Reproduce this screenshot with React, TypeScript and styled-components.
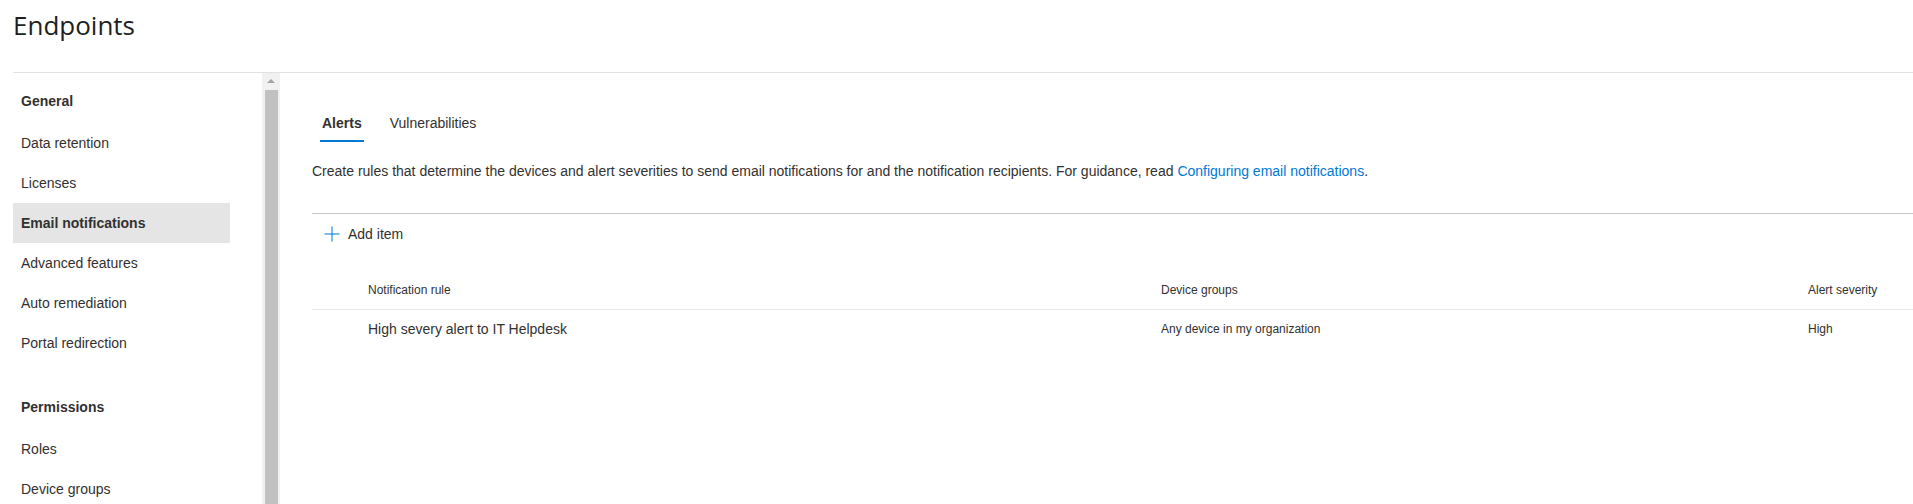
import React from "react"
import styled, { createGlobalStyle } from "styled-components"

const GlobalStyle = createGlobalStyle`
  html, body {
    margin: 0;
    padding: 0;
    background: #ffffff;
    overflow: hidden;
  }
  body {
    font-family: "Segoe UI", "Liberation Sans", Arial, sans-serif;
    color: #323130;
    -webkit-font-smoothing: antialiased;
  }
`

type NavEntry = { label: string; heading?: boolean; selected?: boolean; spaced?: boolean }

const NAV: NavEntry[] = [
  { label: "General", heading: true },
  { label: "Data retention" },
  { label: "Licenses" },
  { label: "Email notifications", selected: true },
  { label: "Advanced features" },
  { label: "Auto remediation" },
  { label: "Portal redirection" },
  { label: "Permissions", heading: true, spaced: true },
  { label: "Roles" },
  { label: "Device groups" },
]

const TABS = ["Alerts", "Vulnerabilities"]

const ROWS = [
  { rule: "High severy alert to IT Helpdesk", groups: "Any device in my organization", severity: "High" },
]

const PlusIcon = () => (
  <svg width="16" height="16" viewBox="0 0 16 16" aria-hidden="true">
    <path d="M8 0.5V15.5M0.5 8H15.5" stroke="#0078d4" strokeWidth="1" fill="none" />
  </svg>
)

const App = () => {
  return (
    <Page>
      <GlobalStyle />
      <Header>
        <Title>Endpoints</Title>
      </Header>
      <Body>
        <Sidebar>
          {NAV.map((item) =>
            item.heading ? (
              <NavHeading key={item.label} spaced={item.spaced}>
                {item.label}
              </NavHeading>
            ) : (
              <NavItem key={item.label} selected={item.selected}>
                {item.label}
              </NavItem>
            )
          )}
        </Sidebar>
        <ScrollTrack>
          <ScrollArrow />
          <ScrollThumb />
        </ScrollTrack>
        <Main>
          <TabBar>
            {TABS.map((t, i) => (
              <Tab key={t} active={i === 0}>
                {t}
              </Tab>
            ))}
          </TabBar>
          <Description>
            Create rules that determine the devices and alert severities to send email notifications for
            and the notification recipients. For guidance, read{" "}
            <Link href="#">Configuring email notifications</Link>.
          </Description>
          <CommandBar>
            <CommandButton>
              <PlusIcon />
              <span>Add item</span>
            </CommandButton>
          </CommandBar>
          <Table>
            <HeaderRow>
              <span />
              <HeaderCell>Notification rule</HeaderCell>
              <HeaderCell>Device groups</HeaderCell>
              <HeaderCell>Alert severity</HeaderCell>
            </HeaderRow>
            {ROWS.map((r) => (
              <DataRow key={r.rule}>
                <span />
                <Cell primary>{r.rule}</Cell>
                <Cell>{r.groups}</Cell>
                <Cell>{r.severity}</Cell>
              </DataRow>
            ))}
          </Table>
        </Main>
      </Body>
    </Page>
  )
}

const Page = styled.div`
  width: 1913px;
  height: 504px;
  overflow: hidden;
`

const Header = styled.header`
  margin-left: 13px;
  height: 73px;
  border-bottom: 1px solid #e1e1e1;
  box-sizing: border-box;
  padding-top: 8px;
`

const Title = styled.h1`
  margin: 0;
  font-family: "Open Sans", "Segoe UI", sans-serif;
  font-weight: 400;
  font-size: 26px;
  line-height: 34px;
  color: #201f1e;
`

const Body = styled.div`
  display: flex;
  height: 431px;
`

const Sidebar = styled.nav`
  width: 249px;
  padding: 8px 0 0 13px;
  box-sizing: content-box;
  display: flex;
  flex-direction: column;
`

const NavHeading = styled.div<{ spaced?: boolean }>`
  width: 217px;
  height: 40px;
  line-height: 40px;
  padding-left: 8px;
  box-sizing: border-box;
  margin-top: ${(p) => (p.spaced ? "24px" : "0")};
  margin-bottom: 2px;
  font-size: 14px;
  font-weight: 600;
  color: #323130;
`

const NavItem = styled.div<{ selected?: boolean }>`
  width: 217px;
  height: 40px;
  line-height: 40px;
  padding-left: 8px;
  box-sizing: border-box;
  font-size: 14px;
  font-weight: ${(p) => (p.selected ? 600 : 400)};
  background: ${(p) => (p.selected ? "#e5e5e5" : "transparent")};
  color: #323130;
`

const ScrollTrack = styled.div`
  width: 18px;
  flex-shrink: 0;
  background: #f1f1f1;
  display: flex;
  flex-direction: column;
  align-items: center;
  padding-top: 6px;
  box-sizing: border-box;
`

const ScrollArrow = styled.div`
  width: 0;
  height: 0;
  border-left: 4px solid transparent;
  border-right: 4px solid transparent;
  border-bottom: 4px solid #a3a3a3;
`

const ScrollThumb = styled.div`
  margin-top: 7px;
  width: 13px;
  flex: 1;
  background: #c1c1c1;
`

const Main = styled.main`
  flex: 1;
  padding: 30px 0 0 32px;
  display: flex;
  flex-direction: column;
`

const TabBar = styled.div`
  display: flex;
  gap: 8px;
  height: 40px;
`

const Tab = styled.div<{ active?: boolean }>`
  position: relative;
  padding: 0 10px;
  line-height: 40px;
  font-size: 14px;
  font-weight: ${(p) => (p.active ? 600 : 400)};
  color: #323130;
  &::after {
    content: "";
    display: ${(p) => (p.active ? "block" : "none")};
    position: absolute;
    left: 8px;
    right: 8px;
    bottom: 1px;
    height: 2px;
    background: #0078d4;
  }
`

const Description = styled.p`
  margin: 18px 0 0;
  font-size: 14px;
  line-height: 20px;
  color: #323130;
`

const Link = styled.a`
  color: #0078d4;
  text-decoration: none;
`

const CommandBar = styled.div`
  margin-top: 32px;
  border-top: 1px solid #c8c8c8;
  height: 40px;
  display: flex;
  align-items: center;
`

const CommandButton = styled.div`
  display: flex;
  align-items: center;
  gap: 8px;
  padding-left: 12px;
  font-size: 14px;
  color: #323130;
`

const Table = styled.div`
  margin-top: 16px;
  display: flex;
  flex-direction: column;
`

const columns = "56px 793px 647px 1fr"

const HeaderRow = styled.div`
  display: grid;
  grid-template-columns: ${columns};
  height: 39px;
  align-items: center;
  border-bottom: 1px solid #edebe9;
`

const HeaderCell = styled.span`
  font-size: 12px;
  color: #323130;
`

const DataRow = styled.div`
  display: grid;
  grid-template-columns: ${columns};
  height: 38px;
  align-items: center;
`

const Cell = styled.span<{ primary?: boolean }>`
  font-size: ${(p) => (p.primary ? "14px" : "12px")};
  color: #323130;
`

export default App
